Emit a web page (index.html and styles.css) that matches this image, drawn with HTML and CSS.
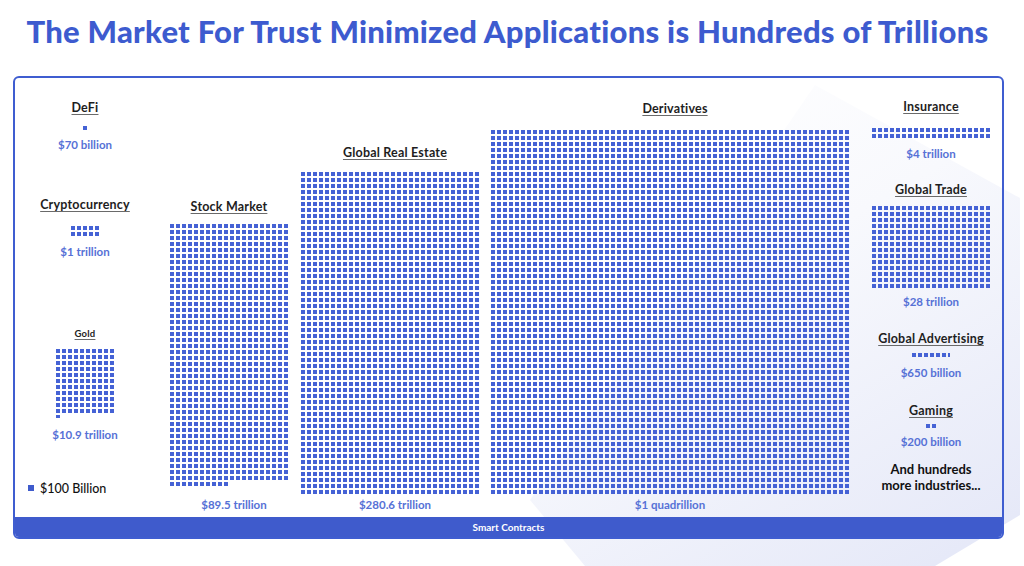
FILE: index.html
```html
<!DOCTYPE html>
<html>
<head>
<meta charset="utf-8">
<link rel="stylesheet" href="styles.css">
</head>
<body>
<svg class="bg-shape" width="1024" height="566" viewBox="0 0 1024 566">
  <defs>
    <linearGradient id="hexfill" x1="0.2" y1="0" x2="0.8" y2="1">
      <stop offset="0" stop-color="#ffffff"/>
      <stop offset="0.4" stop-color="#f8f9fd"/>
      <stop offset="1" stop-color="#e6e9f8"/>
    </linearGradient>
  </defs>
  <polygon points="815,85 1020,198 1020,515 925,572 590,572 530,500" fill="url(#hexfill)"/>
</svg>

<h1 class="title">The Market For Trust Minimized Applications is Hundreds of Trillions</h1>

<div class="panel">
  <div class="chart">
    <div class="col col-left">
      <div class="head h-defi">DeFi</div>
      <div class="dots m11" style="--c:1;--r:1"></div>
      <div class="val m8">$70 billion</div>
      <div class="head h-crypto">Cryptocurrency</div>
      <div class="dots m14" style="--c:5;--r:2"></div>
      <div class="val m9">$1 trillion</div>
      <div class="head head-small h-gold">Gold</div>
      <div class="stack m9">
        <div class="dots" style="--c:10;--r:11"></div>
        <div class="dots partial-dot"></div>
      </div>
      <div class="val m10">$10.9 trillion</div>
      <div class="legend">
        <span class="legend-dot"></span>
        <span class="legend-text">$100 Billion</span>
      </div>
    </div>

    <div class="col col-bar col-stock">
      <div class="head bar-head">Stock Market</div>
      <div class="stack">
        <div class="dots" style="--c:20;--r:43"></div>
        <div class="dots stock-partial" style="--c:10;--r:1"></div>
      </div>
      <div class="val shift">$89.5 trillion</div>
    </div>

    <div class="col col-bar col-estate">
      <div class="head bar-head shift">Global Real Estate</div>
      <div class="dots estate-dots" style="--c:30;--r:54"></div>
      <div class="val shift">$280.6 trillion</div>
    </div>

    <div class="col col-bar col-deriv">
      <div class="head bar-head deriv-head shift">Derivatives</div>
      <div class="dots deriv-dots" style="--c:60;--r:61"></div>
      <div class="val">$1 quadrillion</div>
    </div>

    <div class="col col-right">
      <div class="head h-ins">Insurance</div>
      <div class="dots m14" style="--c:20;--r:2"></div>
      <div class="val m9">$4 trillion</div>
      <div class="head m22">Global Trade</div>
      <div class="dots m9" style="--c:20;--r:14"></div>
      <div class="val m7">$28 trillion</div>
      <div class="head m23">Global Advertising</div>
      <div class="dots ad-dots m7"></div>
      <div class="val m9">$650 billion</div>
      <div class="head m24">Gaming</div>
      <div class="dots m6" style="--c:2;--r:1"></div>
      <div class="val m7">$200 billion</div>
      <div class="more">And hundreds<br>more industries...</div>
    </div>
  </div>
  <div class="footer-bar">Smart Contracts</div>
</div>
</body>
</html>
```

FILE: styles.css
```css
* { box-sizing: border-box; }

html, body {
  margin: 0;
  padding: 0;
}

body {
  width: 1024px;
  height: 566px;
  overflow: hidden;
  position: relative;
  background: #ffffff;
  font-family: "Lato", "Liberation Sans", sans-serif;
  color: #1c1c1c;
}

.bg-shape {
  position: absolute;
  left: 0;
  top: 0;
  z-index: 0;
}

.title {
  position: relative;
  z-index: 1;
  margin: 0;
  padding: 13px 9px 0 0;
  height: 49px;
  font-size: 31px;
  line-height: 36px;
  font-weight: 900;
  color: #3d5bcf;
  text-align: center;
  letter-spacing: 0.25px;
}

.panel {
  position: relative;
  z-index: 1;
  margin: 27px 0 0 13px;
  width: 991px;
  height: 463px;
  border: 2px solid #3f5dd0;
  border-radius: 6px;
  display: flex;
  flex-direction: column;
  overflow: hidden;
}

.chart {
  flex: 1;
  display: flex;
}

.footer-bar {
  height: 20px;
  background: #3f5bcc;
  color: #ffffff;
  font-size: 10px;
  font-weight: 700;
  line-height: 20px;
  text-align: center;
}

.col {
  display: flex;
  flex-direction: column;
  align-items: center;
}

.col-left { width: 140px; }
.col-right { width: 130px; margin-left: 17px; }

.col-bar {
  justify-content: flex-end;
  padding-bottom: 5px;
}
.col-stock { width: 118px; margin-left: 15px; }
.col-estate { width: 178px; margin-left: 13px; }
.col-deriv { width: 358px; margin-left: 12px; }

.head {
  font-size: 12.5px;
  line-height: 14px;
  font-weight: 700;
  letter-spacing: 0.2px;
  color: #1e1e1e;
  text-decoration: underline;
  text-decoration-color: #6a6a6a;
  text-decoration-thickness: 1px;
  text-underline-offset: 2px;
  white-space: nowrap;
}

.head-small {
  font-size: 9.5px;
  line-height: 12px;
}

.bar-head { margin-bottom: 10px; }
.estate-dots { margin-top: 2px; }
.deriv-head { margin-bottom: 14px; }
.shift { position: relative; left: 5px; }

.val {
  font-size: 11.5px;
  line-height: 14px;
  font-weight: 700;
  color: #5671d6;
  white-space: nowrap;
}

.col-bar .val { margin-top: 4px; }

.dots {
  --blue: #4562d5;
  width: calc(var(--c) * 6px - 2px);
  height: calc(var(--r) * 6px - 2px);
  background: conic-gradient(at 4px 4px, transparent 0 75%, var(--blue) 75% 100%) 0 0 / 6px 6px;
  flex: none;
}

.stack {
  display: flex;
  flex-direction: column;
  align-items: flex-start;
}

.partial-dot {
  width: 4px;
  height: 3px;
  margin-top: 2px;
}

.stock-partial {
  margin-top: 2px;
  margin-bottom: 8px;
}

.ad-dots {
  width: 38px;
  height: 4px;
}

.h-defi { margin-top: 23px; }
.h-crypto { margin-top: 46px; }
.h-gold { margin-top: 69px; }
.h-ins { margin-top: 22px; }

.m6 { margin-top: 6px; }
.m7 { margin-top: 7px; }
.m8 { margin-top: 8px; }
.m9 { margin-top: 9px; }
.m10 { margin-top: 10px; }
.m11 { margin-top: 11px; }
.m14 { margin-top: 14px; }
.m22 { margin-top: 22px; }
.m23 { margin-top: 23px; }
.m24 { margin-top: 24px; }

.legend {
  align-self: flex-start;
  margin: 38px 0 0 13px;
  display: flex;
  align-items: center;
  height: 16px;
}

.legend-dot {
  width: 6px;
  height: 6px;
  background: #3f5bcc;
  margin-right: 6px;
}

.legend-text {
  font-size: 12.5px;
  font-weight: 500;
  color: #111111;
}

.more {
  margin-top: 12px;
  font-size: 13px;
  line-height: 16px;
  font-weight: 700;
  color: #111111;
  text-align: center;
}
```
